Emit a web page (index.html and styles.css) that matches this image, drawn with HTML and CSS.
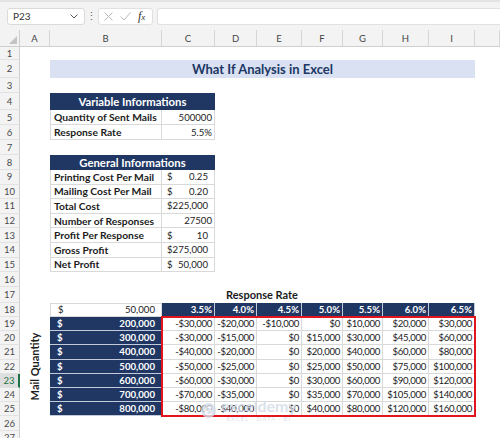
FILE: index.html
```html
<!DOCTYPE html>
<html lang="en">
<head>
    <meta charset="UTF-8">
    <meta name="viewport" content="width=device-width, initial-scale=1.0">
    <title>What If Analysis in Excel</title>
    <link rel="stylesheet" href="styles.css">
</head>
<body>
    <div class="formula-bar">
        <div class="name-box">
            <span>P23</span>
            <svg width="8" height="5" viewBox="0 0 8 5"><path d="M0.5 0.5 L4 4 L7.5 0.5" fill="none" stroke="#555" stroke-width="1"/></svg>
        </div>
        <span class="dots">⋮</span>
        <div class="fx-box">
            <svg width="9" height="9" viewBox="0 0 9 9"><path d="M0.5 0.5 L8.5 8.5 M8.5 0.5 L0.5 8.5" stroke="#b8b8b8" stroke-width="1"/></svg>
            <svg width="11" height="9" viewBox="0 0 11 9"><path d="M0.5 4.5 L4 8 L10.5 0.5" fill="none" stroke="#b8b8b8" stroke-width="1"/></svg>
            <span class="fx"><i>f</i><i class="sub">x</i></span>
        </div>
        <div class="formula-input"></div>
    </div>

    <div class="sheet">
        <!-- column headers -->
        <div class="corner"><span class="tri"></span></div>
        <div class="ch">A</div>
        <div class="ch">B</div>
        <div class="ch">C</div>
        <div class="ch">D</div>
        <div class="ch">E</div>
        <div class="ch">F</div>
        <div class="ch">G</div>
        <div class="ch">H</div>
        <div class="ch">I</div>
        <div class="ch"></div>

        <div class="rh">1</div>

        <div class="rh">2</div>
        <div class="title">What If Analysis in Excel</div>

        <div class="rh">3</div>

        <div class="rh">4</div>
        <div class="c hd2 nv">Variable Informations</div>

        <div class="rh">5</div>
        <div class="c cb lbl bl bx">Quantity of Sent Mails</div>
        <div class="c num bx">500000</div>

        <div class="rh">6</div>
        <div class="c cb lbl bl bx">Response Rate</div>
        <div class="c num bx">5.5%</div>

        <div class="rh">7</div>

        <div class="rh">8</div>
        <div class="c hd2 nv">General Informations</div>

        <div class="rh">9</div>
        <div class="c cb lbl bl bx">Printing Cost Per Mail</div>
        <div class="c acct bx"><span>$</span><span>0.25</span></div>

        <div class="rh">10</div>
        <div class="c cb lbl bl bx">Mailing Cost Per Mail</div>
        <div class="c acct bx"><span>$</span><span>0.20</span></div>

        <div class="rh">11</div>
        <div class="c cb lbl bl bx">Total Cost</div>
        <div class="c acct bx"><span>$225,000</span></div>

        <div class="rh">12</div>
        <div class="c cb lbl bl bx">Number of Responses</div>
        <div class="c num bx">27500</div>

        <div class="rh">13</div>
        <div class="c cb lbl bl bx">Profit Per Response</div>
        <div class="c acct bx"><span>$</span><span>10</span></div>

        <div class="rh">14</div>
        <div class="c cb lbl bl bx">Gross Profit</div>
        <div class="c acct bx"><span>$275,000</span></div>

        <div class="rh">15</div>
        <div class="c cb lbl bl bx">Net Profit</div>
        <div class="c acct bx"><span>$</span><span>50,000</span></div>

        <div class="rh">16</div>

        <div class="rh">17</div>
        <div class="c rate-title">Response Rate</div>

        <div class="rh">18</div>
        <div class="c cb acct side bl bt bx"><span>$</span><span>50,000</span></div>
        <div class="c num nv bn">3.5%</div>
        <div class="c num nv bn">4.0%</div>
        <div class="c num nv bn">4.5%</div>
        <div class="c num nv bn">5.0%</div>
        <div class="c num nv bn">5.5%</div>
        <div class="c num nv bn">6.0%</div>
        <div class="c num nv bn">6.5%</div>

        <div class="rh">19</div>
        <div class="mail-qty"><span>Mail Quantity</span></div>
        <div class="c cb acct side nv bn"><span>$</span><span>200,000</span></div>
        <div class="c num val bx">-$30,000</div>
        <div class="c num val bx">-$20,000</div>
        <div class="c num val bx">-$10,000</div>
        <div class="c num val bx">$0</div>
        <div class="c num val bx">$10,000</div>
        <div class="c num val bx">$20,000</div>
        <div class="c num val bx">$30,000</div>

        <div class="rh">20</div>
        <div class="c cb acct side nv bn"><span>$</span><span>300,000</span></div>
        <div class="c num val bx">-$30,000</div>
        <div class="c num val bx">-$15,000</div>
        <div class="c num val bx">$0</div>
        <div class="c num val bx">$15,000</div>
        <div class="c num val bx">$30,000</div>
        <div class="c num val bx">$45,000</div>
        <div class="c num val bx">$60,000</div>

        <div class="rh">21</div>
        <div class="c cb acct side nv bn"><span>$</span><span>400,000</span></div>
        <div class="c num val bx">-$40,000</div>
        <div class="c num val bx">-$20,000</div>
        <div class="c num val bx">$0</div>
        <div class="c num val bx">$20,000</div>
        <div class="c num val bx">$40,000</div>
        <div class="c num val bx">$60,000</div>
        <div class="c num val bx">$80,000</div>

        <div class="rh">22</div>
        <div class="c cb acct side nv bn"><span>$</span><span>500,000</span></div>
        <div class="c num val bx">-$50,000</div>
        <div class="c num val bx">-$25,000</div>
        <div class="c num val bx">$0</div>
        <div class="c num val bx">$25,000</div>
        <div class="c num val bx">$50,000</div>
        <div class="c num val bx">$75,000</div>
        <div class="c num val bx">$100,000</div>

        <div class="rh active">23</div>
        <div class="c cb acct side nv bn"><span>$</span><span>600,000</span></div>
        <div class="c num val bx">-$60,000</div>
        <div class="c num val bx">-$30,000</div>
        <div class="c num val bx">$0</div>
        <div class="c num val bx">$30,000</div>
        <div class="c num val bx">$60,000</div>
        <div class="c num val bx">$90,000</div>
        <div class="c num val bx">$120,000</div>

        <div class="rh">24</div>
        <div class="c cb acct side nv bn"><span>$</span><span>700,000</span></div>
        <div class="c num val bx">-$70,000</div>
        <div class="c num val bx">-$35,000</div>
        <div class="c num val bx">$0</div>
        <div class="c num val bx">$35,000</div>
        <div class="c num val bx">$70,000</div>
        <div class="c num val bx">$105,000</div>
        <div class="c num val bx">$140,000</div>

        <div class="rh">25</div>
        <div class="c cb acct side nv bn"><span>$</span><span>800,000</span></div>
        <div class="c num val bx">-$80,000</div>
        <div class="c num val bx">-$40,000</div>
        <div class="c num val bx">$0</div>
        <div class="c num val bx">$40,000</div>
        <div class="c num val bx">$80,000</div>
        <div class="c num val bx">$120,000</div>
        <div class="c num val bx">$160,000</div>

        <div class="rh">26</div>
        <div class="rh">27</div>

        <!-- overlays -->
        <div class="red-box"></div>
        <div class="watermark">
            <svg width="17" height="17" viewBox="0 0 16 16"><circle cx="8" cy="8" r="7" fill="#d3dbe8"/><path d="M4.5 8.5 H11.5 M11 6 A3.5 3.5 0 1 0 11 11" fill="none" stroke="#fff" stroke-width="1.6"/></svg>
            <div class="wm-text">
                <span class="wm-name">exceldemy</span>
                <span class="wm-tag">EXCEL · DATA · BI</span>
            </div>
        </div>
    </div>
</body>
</html>
```

FILE: styles.css
```css
* {
    margin: 0;
    padding: 0;
    box-sizing: border-box;
}

body {
    width: 500px;
    height: 438px;
    overflow: hidden;
    background-color: #fff;
    font-family: Lato, 'Liberation Sans', sans-serif;
    color: #1c1c1c;
}

/* formula bar */
.formula-bar {
    height: 30px;
    background-color: #f3f3f3;
    border-top: 2px solid #e3e3e3;
    display: flex;
    align-items: center;
    padding-left: 7px;
}

.name-box {
    width: 78px;
    height: 17px;
    background-color: #fff;
    border: 1px solid #dadada;
    border-radius: 3px;
    display: flex;
    align-items: center;
    justify-content: space-between;
    padding: 0 6px 0 5px;
    font-size: 10px;
    color: #333;
}

.dots {
    width: 13px;
    text-align: center;
    font-size: 11px;
    color: #666;
}

.fx-box {
    width: 55px;
    height: 17px;
    background-color: #fff;
    border: 1px solid #e0e0e0;
    border-radius: 3px;
    display: flex;
    align-items: center;
    gap: 7px;
    padding-left: 5px;
}

.fx {
    font-family: 'Liberation Serif', serif;
    font-size: 12px;
    color: #333;
}

.fx .sub {
    font-size: 9px;
}

.formula-input {
    flex: 1;
    height: 17px;
    margin-left: 4px;
    background-color: #fff;
    border: 1px solid #e0e0e0;
    border-right: none;
    border-radius: 3px 0 0 3px;
}

/* sheet grid */
.sheet {
    position: relative;
    display: grid;
    grid-template-columns: 20px 30px 112px 53px 42px 45px 41px 40px 46px 46px 25px;
    grid-template-rows:
        17px 13px 18px 15px 17px 15px 15px 15px 15px
        repeat(7, 14.6px)
        15px 15.5px 14.3px
        repeat(7, 14.2px)
        14.5px 14.5px;
    font-size: 9.6px;
}

.corner {
    position: relative;
    background-color: #f3f3f3;
    border-right: 1px solid #cfcfcf;
    border-bottom: 1px solid #cfcfcf;
}

.tri {
    position: absolute;
    right: 2px;
    bottom: 2px;
    width: 0;
    height: 0;
    border-left: 8px solid transparent;
    border-bottom: 8px solid #c4c4c4;
}

.ch {
    background-color: #f3f3f3;
    border-right: 1px solid #d6d6d6;
    border-bottom: 1px solid #cfcfcf;
    display: flex;
    align-items: center;
    justify-content: center;
    font-size: 9.5px;
    color: #444;
}

.rh {
    grid-column: 1;
    background-color: #f3f3f3;
    border-right: 1px solid #cfcfcf;
    border-bottom: 1px solid #e2e2e2;
    display: flex;
    align-items: center;
    justify-content: center;
    font-size: 9.5px;
    color: #4a4a4a;
}

.rh.active {
    background-color: #dedede;
    border-right: 2px solid #1e7145;
    color: #1e7145;
}

/* cells */
.c {
    display: flex;
    align-items: center;
    padding: 0 3px;
    white-space: nowrap;
}

.cb {
    grid-column-start: 3;
}

.lbl {
    font-weight: 700;
    font-size: 10.3px;
}

.num {
    justify-content: flex-end;
    padding-right: 2px;
}

.val {
    letter-spacing: -0.3px;
    color: #222;
}

.acct {
    justify-content: space-between;
    padding: 0 6px 0 5px;
}

.side {
    padding: 0 6px 0 7px;
}

.nv {
    background-color: #203764;
    color: #fff;
    font-weight: 700;
}

.bx {
    border-right: 1px solid #d9d9d9;
    border-bottom: 1px solid #d9d9d9;
}

.bl {
    border-left: 1px solid #d9d9d9;
}

.bt {
    border-top: 1px solid #d9d9d9;
}

.bn {
    border-right: 1px solid #c3cbdb;
    border-bottom: 1px solid #c3cbdb;
}

.title {
    grid-column: 3 / span 8;
    background-color: #d9e1f2;
    color: #203764;
    font-weight: 700;
    font-size: 13px;
    display: flex;
    align-items: center;
    justify-content: center;
}

.hd2 {
    grid-column: 3 / span 2;
    justify-content: center;
    font-size: 11.3px;
}

.rate-title {
    grid-column: 5 / span 2;
    justify-content: center;
    padding-left: 10px;
    font-weight: 700;
    font-size: 11px;
}

.mail-qty {
    grid-column: 2;
    grid-row: span 7;
    display: flex;
    align-items: center;
    justify-content: center;
}

.mail-qty span {
    transform: rotate(-90deg);
    white-space: nowrap;
    font-weight: 700;
    font-size: 11px;
}

/* overlays */
.red-box {
    position: absolute;
    grid-row: 20 / 27;
    grid-column: 4 / 11;
    top: -1px;
    left: -1px;
    right: -1px;
    bottom: -1px;
    border: 2px solid #e2151f;
    pointer-events: none;
}

.watermark {
    position: absolute;
    left: 200px;
    top: 368px;
    display: flex;
    align-items: center;
    gap: 4px;
    opacity: 0.8;
    pointer-events: none;
}

.wm-text {
    display: flex;
    flex-direction: column;
    align-items: center;
    line-height: 1;
}

.wm-name {
    font-size: 16px;
    font-weight: 700;
    color: #d3dbe8;
}

.wm-tag {
    font-size: 6px;
    letter-spacing: 1px;
    color: #d3dbe8;
    margin-top: 2px;
}
```
